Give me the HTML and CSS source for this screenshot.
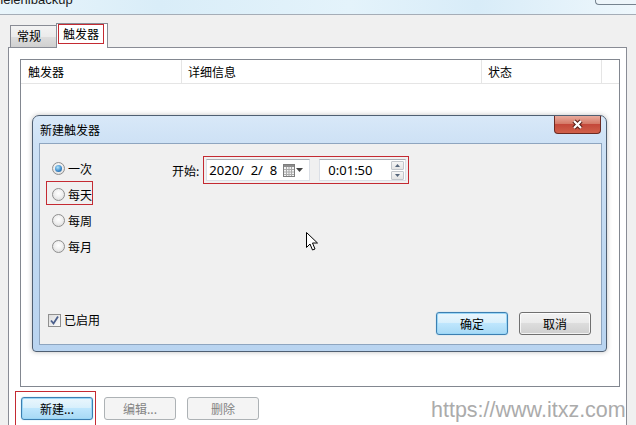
FILE: index.html
```html
<!DOCTYPE html>
<html lang="zh-CN">
<head>
    <meta charset="UTF-8">
    <title>helenibackup - 触发器</title>
    <link rel="stylesheet" href="styles.css">
</head>
<body>
<div class="screen">
    <div class="appbar">
        <span class="app-title">helenibackup</span>
        <span class="app-ctrl"></span>
    </div>

    <div class="tabs">
        <div class="tab">常规</div>
        <div class="tab tab-active"><span class="tab-mark">触发器</span></div>
    </div>

    <div class="panel">
        <div class="list">
            <div class="list-head">
                <div class="col col-name">触发器</div>
                <div class="col col-info">详细信息</div>
                <div class="col col-state">状态</div>
                <div class="col col-fill"></div>
            </div>
        </div>
        <div class="actions">
            <button class="btn btn-default">新建...</button>
            <button class="btn" disabled>编辑...</button>
            <button class="btn" disabled>删除</button>
        </div>
    </div>

    <!-- modal: new trigger -->
    <div class="dialog">
        <div class="dlg-title">
            <span class="dlg-title-text">新建触发器</span>
            <span class="dlg-close">
                <svg width="15" height="11" viewBox="0 0 15 11">
                    <path d="M4 2 L11 9 M11 2 L4 9" stroke="#5b1f17" stroke-width="4.4" fill="none"/>
                    <path d="M4 2 L11 9 M11 2 L4 9" stroke="#fff" stroke-width="2.2" fill="none"/>
                </svg>
            </span>
        </div>
        <div class="dlg-body">
            <div class="dlg-top">
                <div class="radios">
                    <label class="radio-row"><span class="radio radio-on"></span>一次</label>
                    <label class="radio-row"><span class="radio"></span>每天</label>
                    <label class="radio-row"><span class="radio"></span>每周</label>
                    <label class="radio-row"><span class="radio"></span>每月</label>
                </div>
                <div class="start-row">
                    <span class="start-label">开始:</span>
                    <div class="field-mark">
                        <div class="textbox datebox">
                            <span class="date-text">2020/  2/  8</span>
                            <svg class="cal-icon" width="12" height="13" viewBox="0 0 12 13">
                                <rect x="0.5" y="0.5" width="11" height="12" fill="#f3f3f3" stroke="#7d7d7d"/>
                                <rect x="1" y="1" width="10" height="2" fill="#8d8d8d"/>
                                <path d="M1 5.5 H11 M1 8 H11 M1 10.5 H11 M3.5 3 V12 M6 3 V12 M8.5 3 V12" stroke="#a9a9a9" stroke-width="1"/>
                            </svg>
                            <svg class="drop-arrow" width="7" height="4" viewBox="0 0 7 4"><path d="M0 0 H7 L3.5 4 Z" fill="#444"/></svg>
                        </div>
                        <div class="textbox timebox">
                            <span class="time-text">0:01:50</span>
                            <div class="spin">
                                <span class="spin-btn"><svg width="5" height="3" viewBox="0 0 5 3"><path d="M0 3 L2.5 0 L5 3 Z" fill="#55657a"/></svg></span>
                                <span class="spin-btn"><svg width="5" height="3" viewBox="0 0 5 3"><path d="M0 0 L2.5 3 L5 0 Z" fill="#55657a"/></svg></span>
                            </div>
                        </div>
                    </div>
                </div>
            </div>
            <div class="dlg-bottom">
                <label class="check-row">
                    <span class="checkbox">
                        <svg width="11" height="11" viewBox="0 0 11 11"><path d="M2 5.5 L4.5 8.5 L9 1.5" stroke="#4b5f8c" stroke-width="1.8" fill="none"/></svg>
                    </span>已启用
                </label>
                <div class="dlg-buttons">
                    <button class="btn btn-default">确定</button>
                    <button class="btn">取消</button>
                </div>
            </div>
        </div>
    </div>

    <div class="mark-box mark-daily"></div>
    <div class="mark-box mark-new"></div>

    <div class="watermark">https://www.itxz.com</div>

    <svg class="cursor" width="13" height="20" viewBox="0 0 13 20">
        <path d="M0.5 0.5 L0.5 15.5 L4 12 L6.5 18 L9 17 L6.5 11 L11.5 11 Z" fill="#fff" stroke="#000" stroke-width="1" stroke-linejoin="miter"/>
    </svg>
</div>
</body>
</html>
```

FILE: styles.css
```css
* {
    box-sizing: border-box;
}

body {
    margin: 0;
    background: #f0f0f0;
    font-family: "Noto Sans CJK SC", sans-serif;
    font-size: 12px;
    color: #000;
}

.screen {
    width: 636px;
    height: 425px;
    position: relative;
    overflow: hidden;
    background: #f0f0f0;
}

/* main window chrome */
.appbar {
    height: 15px;
    border-bottom: 1px solid #a5adb7;
    background: linear-gradient(to right, #e9f5fb, #d9edf8 25%, #e4f3fb 55%, #d8ecf8 75%, #eef7fc);
    display: flex;
    justify-content: space-between;
    overflow: hidden;
}

.app-title {
    margin: -8px 0 0 -4px;
    font-family: "Liberation Sans", sans-serif;
    font-size: 13px;
    line-height: 16px;
    color: #1a1a1a;
}

.app-ctrl {
    width: 41px;
    height: 5px;
    border: 1px solid #76838f;
    border-top: 0;
    border-right: 0;
    border-radius: 0 0 0 4px;
    background: #edf5fa;
}

/* tabs */
.tabs {
    height: 32px;
    display: flex;
    align-items: flex-end;
    padding-left: 10px;
}

.tab {
    width: 46px;
    height: 22px;
    padding: 2px 0 0 6px;
    border: 1px solid #898c95;
    border-bottom: 0;
    border-right: 0;
    background: linear-gradient(#f3f3f3, #ebebeb 50%, #dedede 51%, #d0d0d0);
    line-height: 16px;
}

.tab-active {
    width: 52px;
    height: 25px;
    margin-bottom: -1px;
    padding: 0 0 0 1px;
    border-right: 1px solid #898c95;
    background: #fff;
    position: relative;
    z-index: 1;
}

.tab-mark {
    display: block;
    width: 46px;
    height: 20px;
    border: 1px solid #c42a32;
    text-align: center;
    line-height: 18px;
}

.panel {
    height: 400px;
    margin: 0 9px 0 8px;
    padding: 11px 6px 0 11px;
    border: 1px solid #898c95;
    background: #fff;
}

.list {
    width: 600px;
    height: 328px;
    border: 1px solid #828790;
    background: #fff;
}

.list-head {
    height: 24px;
    display: flex;
    border-bottom: 1px solid #e5e5e5;
}

.col {
    border-right: 1px solid #e5e5e5;
    padding-left: 6px;
    line-height: 23px;
}

.col-name {
    width: 161px;
    padding-left: 7px;
}

.col-info {
    width: 300px;
}

.col-state {
    width: 120px;
}

.col-fill {
    flex: 1;
    border-right: 0;
}

.actions {
    display: flex;
    gap: 11px;
    margin-top: 10px;
    padding-left: 1px;
}

/* buttons */
.btn {
    width: 72px;
    height: 23px;
    padding: 0;
    border: 1px solid #707070;
    border-radius: 3px;
    background: linear-gradient(#f2f2f2, #ebebeb 45%, #dddddd 50%, #cfcfcf);
    box-shadow: inset 0 0 0 1px rgba(255, 255, 255, 0.75);
    font-family: inherit;
    font-size: 12px;
    color: #000;
    line-height: 20px;
}

.btn-default {
    border-color: #3c7fb1;
    background: linear-gradient(#eaf6fd, #d9f0fc 45%, #bee6fd 50%, #a7d9f5);
    box-shadow: inset 0 0 0 1px #9bd7f7, 0 0 1px #5ab5e6;
}

.btn:disabled {
    border-color: #adb2b5;
    background: #f4f4f4;
    box-shadow: none;
    color: #838383;
}

/* dialog */
.dialog {
    position: absolute;
    left: 32px;
    top: 115px;
    width: 575px;
    height: 237px;
    display: flex;
    flex-direction: column;
    border: 1px solid #4f5f72;
    border-radius: 7px 7px 4px 4px;
    background: linear-gradient(#d8e8f8, #cde1f5 12%, #bfd8f1 60%, #b9d4f0);
    box-shadow: 0 0 5px rgba(0, 0, 0, 0.25);
}

.dlg-title {
    height: 27px;
    display: flex;
    justify-content: space-between;
    padding-left: 7px;
}

.dlg-title-text {
    line-height: 28px;
}

.dlg-close {
    width: 47px;
    height: 18px;
    margin-right: 5px;
    display: flex;
    align-items: center;
    justify-content: center;
    border: 1px solid #6b2a22;
    border-top: 0;
    border-radius: 0 0 4px 4px;
    background: linear-gradient(#e9aa9c, #d57a68 45%, #c4483a 50%, #d0604a);
}

.dlg-body {
    flex: 1;
    display: flex;
    flex-direction: column;
    margin: 0 4px 6px 6px;
    padding: 11px 10px 9px 8px;
    border: 1px solid #8ea5bf;
    background: #f0f0f0;
}

.dlg-top {
    display: flex;
}

.radios {
    width: 124px;
    padding-left: 4px;
}

.radio-row {
    height: 26px;
    display: flex;
    align-items: center;
    gap: 3px;
}

.radio {
    width: 13px;
    height: 13px;
    border: 1px solid #8f8f8f;
    border-radius: 50%;
    background: radial-gradient(circle at 50% 40%, #ffffff, #f0f0f0 45%, #d4d4d4);
    display: flex;
    align-items: center;
    justify-content: center;
}

.radio-on::after {
    content: "";
    width: 7px;
    height: 7px;
    border-radius: 50%;
    background: radial-gradient(circle at 40% 35%, #b3e6fb, #3f8ccc 55%, #1c4f80);
}

.start-row {
    display: flex;
    align-items: center;
    height: 28px;
    margin-top: 1px;
}

.start-label {
    margin-right: 4px;
}

.field-mark {
    display: flex;
    gap: 9px;
    padding: 2px;
    border: 1px solid #c42a32;
}

.textbox {
    height: 22px;
    display: flex;
    align-items: center;
    border: 1px solid #dbdfe6;
    border-top-color: #abadb3;
    background: #fff;
}

.datebox {
    width: 104px;
    padding: 0 6px 0 2px;
}

.date-text,
.time-text {
    font-family: "Noto Sans", sans-serif;
    font-size: 13px;
    white-space: pre;
}

.cal-icon {
    margin-left: auto;
}

.drop-arrow {
    margin-left: 1px;
}

.timebox {
    width: 87px;
    padding: 0 1px 0 8px;
}

.spin {
    margin-left: auto;
    display: flex;
    flex-direction: column;
    gap: 1px;
}

.spin-btn {
    width: 13px;
    height: 9px;
    display: flex;
    align-items: center;
    justify-content: center;
    border: 1px solid #c3c7cc;
    border-radius: 1px;
    background: linear-gradient(#f6f6f6, #e4e4e4);
}

.dlg-bottom {
    margin-top: auto;
    display: flex;
}

.check-row {
    margin-top: 1px;
    height: 14px;
    display: flex;
    align-items: center;
    gap: 3px;
    line-height: 14px;
}

.checkbox {
    width: 13px;
    height: 13px;
    display: flex;
    align-items: center;
    justify-content: center;
    border: 1px solid #8f8f8f;
    background: linear-gradient(135deg, #dcdcdc, #fbfbfb);
}

.dlg-buttons {
    margin-left: auto;
    display: flex;
    gap: 11px;
}

/* red annotation boxes drawn over the screenshot */
.mark-box {
    position: absolute;
    border: 1px solid #c42a32;
}

.mark-daily {
    left: 46px;
    top: 181px;
    width: 47px;
    height: 24px;
}

.mark-new {
    left: 15px;
    top: 391px;
    width: 81px;
    height: 40px;
}

.watermark {
    position: absolute;
    left: 431px;
    top: 397px;
    font-family: "Liberation Sans", sans-serif;
    font-size: 21.5px;
    line-height: 26px;
    color: #ababab;
}

.cursor {
    position: absolute;
    left: 306px;
    top: 232px;
}
```
